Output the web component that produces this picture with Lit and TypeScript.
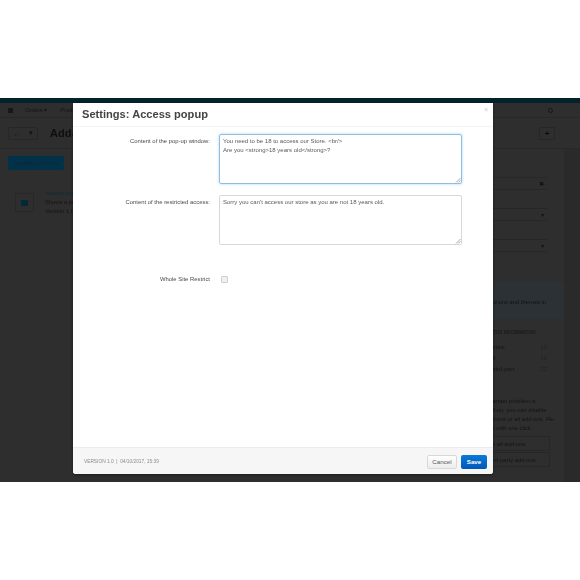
import { LitElement, html, css } from "lit";
import { customElement } from "lit/decorators.js";

@customElement("app-root")
export class AppRoot extends LitElement {
  static styles = css`
    :host { display: block; width: 580px; height: 580px; background: #fff; position: relative; overflow: hidden; font-family: "Liberation Sans", Arial, sans-serif; }
    .page { margin-top: 98px; height: 384px; display: flex; flex-direction: column; background: #2e2e2e; color: #141414; font-size: 5.8px; position: relative; overflow: hidden; }
    .strip { height: 5px; background: #03222c; flex: none; }
    .nav { height: 14px; flex: none; display: flex; align-items: center; padding: 0 29px 0 8px; gap: 13px; border-bottom: 1px solid #282828; filter: blur(.35px); }
    .nav .home { width: 5px; height: 5px; background: #181818; margin-right: -1px; }
    .nav .end { margin-left: auto; width: 5px; height: 5px; border: 1px solid #161616; border-radius: 50%; box-sizing: border-box; margin-right: -2px; }
    .tools { height: 31px; flex: none; display: flex; align-items: center; padding: 0 25px 0 8px; gap: 12px; border-bottom: 1px solid #282828; box-sizing: border-box; }
    .back { width: 30px; height: 13px; border: 1px solid #272727; box-sizing: border-box; border-radius: 2px; display: flex; align-items: center; justify-content: space-around; font-size: 7px; color: #101010; }
    .ttl { font-size: 11px; font-weight: bold; color: #0e0e0e; filter: blur(.3px); }
    .plus { margin-left: auto; width: 16px; height: 13px; border: 1px solid #272727; box-sizing: border-box; display: flex; align-items: center; justify-content: center; font-size: 8px; font-weight: bold; color: #0a0a0a; }
    .body { flex: 1; display: flex; min-height: 0; }
    .main { width: 485px; flex: none; padding: 7px 0 0 8px; box-sizing: border-box; }
    .tab { width: 56px; height: 14px; background: #02324a; border-radius: 2px; color: #0f2732; display: flex; align-items: center; justify-content: center; filter: blur(.3px); }
    .row { margin-top: 23px; display: flex; gap: 11px; padding-left: 7px; }
    .icon { width: 19px; height: 19px; flex: none; border: 1px solid #272727; box-sizing: border-box; display: flex; align-items: center; justify-content: center; }
    .icon i { width: 7px; height: 6px; background: #02283a; border-radius: 1px; }
    .rowtext { line-height: 9px; margin-top: -4px; white-space: nowrap; filter: blur(.3px); }
    .rowtext b { color: #0e2a3a; font-weight: normal; display: block; }
    .side { flex: 1; padding-top: 28px; min-width: 0; }
    .inp { height: 13px; width: 62px; display: flex; justify-content: flex-end; align-items: center; border-bottom: 1px solid #272727; border-top: 1px solid #272727; box-sizing: border-box; font-size: 6px; color: #101010; }
    .inp span { margin-right: 3px; }
    .sel { margin-top: 18px; }
    .info { margin-top: 30px; height: 37px; background: #2c3136; padding: 17px 18px 0 0; box-sizing: border-box; color: #121212; filter: blur(.3px); text-align: right; white-space: nowrap; overflow: hidden; }
    .cols { padding-top: 9px; width: 62px; line-height: 11px; filter: blur(.35px); }
    .cols div { display: flex; justify-content: space-between; padding-left: 4px; }
    .cols .h { padding-left: 0; font-size: 4.6px; line-height: 10px; margin-bottom: 4px; }
    .cols em { font-style: normal; color: #1a2430; }
    .note { margin-top: 22px; line-height: 9px; filter: blur(.3px); white-space: nowrap; overflow: hidden; }
    .btn { width: 65px; height: 15px; margin-top: 1px; border: 1px solid #272727; border-left: 0; box-sizing: border-box; display: flex; align-items: center; filter: blur(.25px); white-space: nowrap; }
    .btn.a { margin-top: 3px; }
    .btn.a span { margin-left: -9px; }
    .rail { width: 16px; flex: none; background: #2a2a2a; }

    .modal { position: absolute; left: 73px; top: 103px; width: 420px; height: 371px; background: #fff; border-radius: 0 0 3px 3px; display: flex; flex-direction: column; box-shadow: 0 1px 3px rgba(0,0,0,.4); overflow: hidden; }
    .head { height: 23px; flex: none; display: flex; align-items: center; padding: 0 5px 0 9px; border-bottom: 1px solid #f4f4f4; position: relative; }
    .head h1 { margin: -1px 0 0; font-size: 11.1px; font-weight: bold; color: #444; filter: blur(.2px); }
    .close { position: absolute; right: 5px; top: 3px; font-size: 7px; color: #d8d8d8; font-weight: bold; line-height: 8px; }
    .form { flex: 1; padding-top: 7px; display: flex; flex-direction: column; color: #4a4a4a; font-size: 5.9px; }
    .f { display: grid; grid-template-columns: 137px 243px; column-gap: 9px; }
    .f label { text-align: right; padding-top: 3px; line-height: 8px; filter: blur(.25px); }
    .ta { height: 50px; box-sizing: border-box; border: 1px solid #d8d8d8; border-radius: 2px; padding: 2px 3px; line-height: 9px; font-size: 6px; color: #5a5a5a; position: relative; white-space: pre; }
    .ta span { filter: blur(.25px); display: block; }
    .ta.on { border-color: #8cc0e2; box-shadow: 0 0 3px rgba(120,185,230,.6); }
    .ta svg { position: absolute; right: 0; bottom: 0; }
    .f + .f { margin-top: 11px; }
    .f.chk { margin-top: 30px; align-items: center; }
    .f.chk label { padding-top: 0; }
    .cb { width: 5px; height: 5px; border: 1px solid #cfcfcf; background: #f0f0f0; border-radius: 1px; margin-left: 2px; }
    .foot { height: 27px; flex: none; background: #f6f6f6; border-top: 1px solid #ececec; display: flex; align-items: center; padding: 1px 6px 0 11px; box-sizing: border-box; gap: 4px; }
    .ver { font-size: 4.8px; color: #8b8b8b; margin-right: auto; filter: blur(.25px); }
    .b { height: 14px; border-radius: 2px; font-size: 6.2px; display: flex; align-items: center; justify-content: center; box-sizing: border-box; }
    .cancel { width: 30px; background: linear-gradient(#fff,#ececec); border: 1px solid #d8d8d8; color: #555; }
    .save { width: 26px; background: linear-gradient(#0a79d6,#0257b8); color: #fff; font-weight: bold; }
  `;

  render() {
    return html`
      <div class="page">
        <div class="strip"></div>
        <div class="nav"><span class="home"></span><span>Orders ▾</span><span>Products</span><span class="end"></span></div>
        <div class="tools">
          <div class="back"><span>←</span><span>▾</span></div>
          <span class="ttl">Add-ons</span>
          <div class="plus">+</div>
        </div>
        <div class="body">
          <div class="main">
            <div class="tab">Installed add-ons</div>
            <div class="row">
              <div class="icon"><i></i></div>
              <div class="rowtext"><b>Access popup</b>Shows a popup<br />Version 1.0</div>
            </div>
          </div>
          <div class="side">
            <div class="inp"><span>✖</span></div>
            <div class="inp sel"><span>▾</span></div>
            <div class="inp sel"><span>▾</span></div>
            <div class="info">add-ons and themes in</div>
            <div class="cols">
              <div class="h">STATUS INFORMATION</div>
              <div><span>Active</span><em>13</em></div>
              <div><span>All</span><em>16</em></div>
              <div><span>Third-part</span><em>22</em></div>
            </div>
            <div class="note">a certain problem is<br />add-on, you can disable<br />add-ons or all add-ons. Re-<br />one with one click.</div>
            <div class="btn a"><span>Disable all add-ons</span></div>
            <div class="btn">Third-party add-ons</div>
          </div>
          <div class="rail"></div>
        </div>
      </div>

      <div class="modal">
        <div class="head"><h1>Settings: Access popup</h1><span class="close">×</span></div>
        <div class="form">
          <div class="f">
            <label>Content of the pop-up window:</label>
            <div class="ta on"><span>You need to be 18 to access our Store. &lt;br/&gt;
Are you &lt;strong&gt;18 years old&lt;/strong&gt;?</span>${this.grip()}</div>
          </div>
          <div class="f">
            <label>Content of the restricted access:</label>
            <div class="ta"><span>Sorry you can't access our store as you are not 18 years old.</span>${this.grip()}</div>
          </div>
          <div class="f chk">
            <label>Whole Site Restrict</label>
            <div><div class="cb"></div></div>
          </div>
        </div>
        <div class="foot">
          <span class="ver">VERSION 1.0 &nbsp;|&nbsp; 04/10/2017, 15:39</span>
          <div class="b cancel">Cancel</div>
          <div class="b save">Save</div>
        </div>
      </div>
    `;
  }

  grip() {
    return html`<svg width="6" height="6" viewBox="0 0 6 6"><path d="M1 5.5 5.5 1M3.2 5.5 5.5 3.2" stroke="#888" stroke-width=".7" fill="none" /></svg>`;
  }
}
